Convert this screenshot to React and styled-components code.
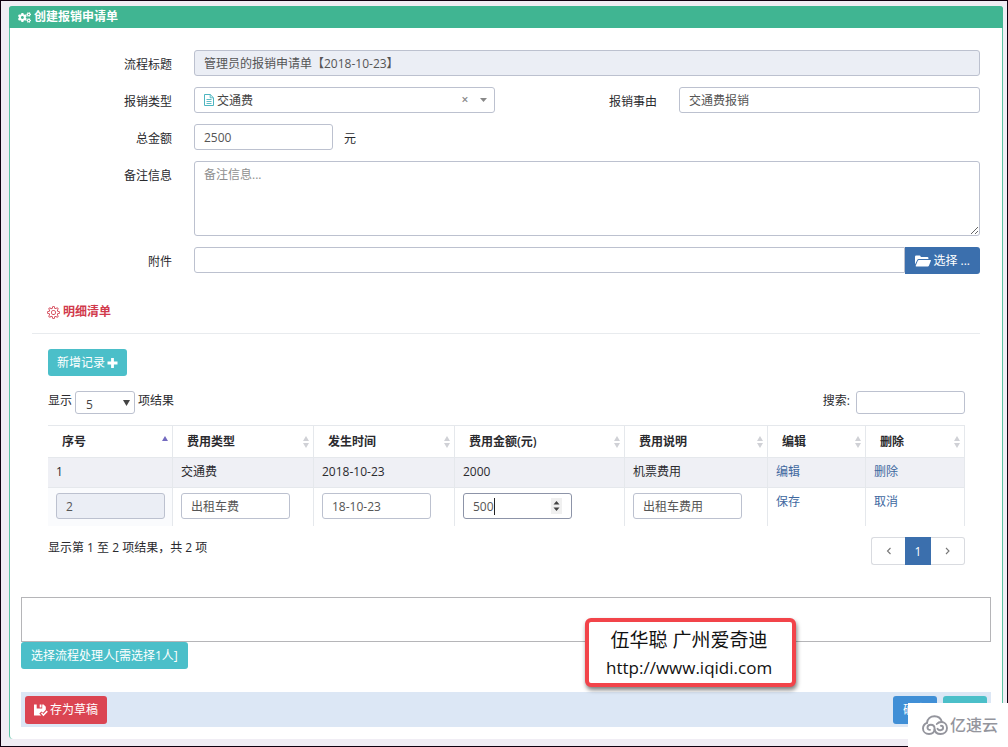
import React, { useState } from 'react';
import styled, { createGlobalStyle, css } from 'styled-components';
import { FaCogs } from 'react-icons/fa';
import { SlSettings } from 'react-icons/sl';

const GlobalStyle = createGlobalStyle`
  * {
    box-sizing: border-box;
  }

  body {
    margin: 0;
    background: #f0edf4;
    color: #2a2a2e;
    font-size: 12px;
    line-height: 18px;
  }

  body, input, select, textarea, button {
    font-family: "Open Sans", "Noto Sans CJK SC", sans-serif;
  }
`;

const Page = styled.div`
  border: 1px solid #100010;
  padding: 5px 4px 7px 8px;
  background: #f0edf4;
`;

const Panel = styled.div`
  border: 1px solid #5cc3a3;
  border-width: 0 1px;
  border-radius: 4px;
  background: #fff;
`;

const PanelTitle = styled.h1`
  display: flex;
  align-items: center;
  gap: 3px;
  height: 22px;
  margin: 0 -1px;
  padding: 0 9px;
  border-radius: 3px 3px 0 0;
  background: #40b592;
  color: #fff;
  font-size: 12px;
  font-weight: 600;
`;

const FormGrid = styled.div`
  display: grid;
  grid-template-columns: 140px 1fr 140px 1fr;
  gap: 11px 22px;
  padding: 22px 22px 0;
`;

const Label = styled.label`
  padding-top: 6px;
  text-align: right;
`;

const Wide = styled.div`
  display: flex;
  align-items: flex-start;
  grid-column: span 3;
`;

const control = css`
  border: 1px solid #bcc1cf;
  border-radius: 3px;
  background: #fff;
  color: #555;
  font-size: 12px;
  line-height: 18px;
  outline: none;
`;

const Input = styled.input`
  ${control}
  width: ${props => props.$width || '100%'};
  height: ${props => props.$height || '26px'};
  padding: 0 9px;

  &:read-only {
    background: #ebeef5;
  }

  &:focus {
    border-color: #8d94a8;
  }
`;

const FileInput = styled(Input)`
  flex: 1;
  min-width: 0;
  border-radius: 3px 0 0 3px;

  &:read-only {
    background: #fff;
  }
`;

const TextArea = styled.textarea`
  ${control}
  display: block;
  width: 100%;
  height: 75px;
  padding: 4px 9px;

  &::placeholder {
    color: #8f8f8f;
  }
`;

const Unit = styled.span`
  padding: 6px 11px 0;
`;

const SelectBox = styled.div`
  position: relative;
  width: ${props => props.$width || '100%'};
`;

const Select = styled.select`
  ${control}
  display: block;
  appearance: none;
  width: 100%;
  height: 26px;
  padding: 1px 44px 0 22px;
  color: #444;
`;

const LengthSelect = styled(Select)`
  height: 23px;
  padding: 3px 20px 0 10px;
  line-height: 20px;
`;

const Overlay = styled.span`
  position: absolute;
  top: 0;
  bottom: 0;
  left: ${props => props.$left || 'auto'};
  right: ${props => props.$right || 'auto'};
  display: flex;
  align-items: center;
  pointer-events: none;
`;

const ClearButton = styled.button`
  position: absolute;
  top: 5px;
  right: 22px;
  width: 16px;
  height: 16px;
  padding: 0;
  border: 0;
  background: none;
  color: #888;
  font-size: 12px;
  font-weight: 600;
  line-height: 16px;
`;

const buttonColors = {
  info: '#4bbfc9',
  primary: '#3b6fad',
  danger: '#db4552',
  confirm: '#408fd6',
};

const Button = styled.button`
  display: inline-flex;
  align-items: center;
  gap: 2px;
  min-width: 44px;
  height: ${props => props.$height || '27px'};
  padding: 0 ${props => (props.$icon ? '9px' : '10px')};
  border: 0;
  border-radius: ${props => (props.$attached ? '0 3px 3px 0' : '3px')};
  background: ${props => buttonColors[props.$kind]};
  color: #fff;
  font-size: 12px;
  line-height: 18px;
  white-space: nowrap;
`;

const Section = styled.section`
  padding: 28px 22px 0;
`;

const SectionTitle = styled.h2`
  display: flex;
  align-items: center;
  gap: 3px;
  margin: 0;
  padding: 0 15px 11px;
  border-bottom: 1px solid #e8ebee;
  color: #d13a4c;
  font-size: 12px;
  font-weight: 600;
  line-height: 20px;
`;

const SectionBody = styled.div`
  padding: 15px 15px 0 16px;
`;

const Toolbar = styled.div`
  display: flex;
  justify-content: space-between;
  margin: 15px 0 11px;
`;

const ToolbarLabel = styled.label`
  display: flex;
  gap: ${props => props.$gap};
  line-height: 19px;
`;

const Table = styled.table`
  width: 100%;
  table-layout: fixed;
  border-collapse: separate;
  border-spacing: 0;
`;

const Th = styled.th`
  position: relative;
  width: ${props => props.$width}px;
  height: 33px;
  padding: 0 14px;
  border: 1px solid #e5e8ec;
  border-left: 0;
  text-align: left;
  font-weight: 600;
`;

const Td = styled.td`
  padding: 5px 7px 5px 8px;
  border-right: 1px solid #e5e8ec;
  vertical-align: top;
`;

const Row = styled.tr`
  ${props => props.$striped && css`
    background: #eff0f5;

    & > td {
      height: 30px;
      border-bottom: 1px solid #e5e8ec;
    }
  `}

  ${props => props.$editing && css`
    & > td {
      height: 38px;
    }

    & > td:first-child {
      background: #fafbfd;
    }
  `}
`;

const CellInput = styled(Input)`
  display: block;
  max-width: 109px;
`;

const AmountCell = styled.div`
  position: relative;
  max-width: 109px;
`;

const AmountInput = styled(CellInput)`
  border-color: #8d94a8;
  appearance: textfield;
  caret-color: transparent;
`;

const Caret = styled.span`
  position: absolute;
  top: 5px;
  left: 31px;
  width: 1px;
  height: 17px;
  background: #222;
`;

const Link = styled.a`
  color: #40689f;
  text-decoration: none;
`;

const TableFooter = styled.div`
  display: flex;
  justify-content: space-between;
  margin-top: 11px;
  line-height: 22px;
`;

const Pagination = styled.nav`
  display: flex;
  height: 28px;
`;

const PageButton = styled.button`
  display: flex;
  align-items: center;
  justify-content: center;
  width: ${props => (props.$active ? '26px' : '34px')};
  padding: 0;
  border: 1px solid ${props => (props.$active ? '#3b6fad' : '#d9dbe0')};
  background: ${props => (props.$active ? '#3b6fad' : '#fff')};
  color: ${props => (props.$active ? '#fff' : '#666')};
  font-size: 12px;

  &:first-child {
    border-right: 0;
    border-radius: 3px 0 0 3px;
  }

  &:last-child {
    border-left: 0;
    border-radius: 0 3px 3px 0;
  }
`;

const Handlers = styled.div`
  padding: 32px 11px 0;
`;

const HandlerBox = styled.div`
  height: 45px;
  border: 1px solid #b5b5b8;
`;

const FooterArea = styled.div`
  padding: 23px 11px 12px;
`;

const FooterBar = styled.footer`
  display: flex;
  justify-content: space-between;
  height: 35px;
  padding: 4px 4px 3px;
  background: #dce7f5;
`;

const FooterGroup = styled.div`
  display: flex;
  gap: 6px;
`;

const Callout = styled.div`
  position: absolute;
  top: 618px;
  left: 585px;
  padding: 5px 20px 2px 17px;
  border: 4px solid #f2444a;
  border-radius: 6px;
  background: #fff;
  box-shadow: 1px 3px 4px rgba(0, 0, 0, 0.5);
  color: #111;
  font-size: 17px;
  line-height: 27px;
  text-align: center;
`;

const CalloutName = styled.div`
  font-size: 19px;
`;

const Badge = styled.div`
  position: absolute;
  top: 703px;
  right: 0;
  display: flex;
  align-items: center;
  gap: 2px;
  width: 100px;
  height: 44px;
  padding-left: 14px;
  background: #fff;
  color: #94959d;
  font-size: 16px;
  font-weight: 500;
`;

const FileIcon = () => (
  <svg width="10" height="12" viewBox="0 0 10 12" fill="none" stroke="#4db5c0">
    <path d="M.5.5h5.7l3.3 3.3v7.7h-9z" />
    <path d="M6.2.5v3.3h3.3M2.5 5.5h5M2.5 7.5h5M2.5 9.5h5" strokeWidth=".9" />
  </svg>
);

const FolderIcon = () => (
  <svg width="16" height="12" viewBox="0 0 16 12" fill="#fff">
    <path d="M0 9.6V1.8Q0 .5 1.2.5h3.4q.8 0 1 .8l.2.7h6.6q1 0 1 1v.9H3.6q-.9 0-1.2.8z" />
    <path d="M3.9 4.9h11.4q.9 0 .6.8l-2 5q-.3.8-1.1.8H1.2q-.8 0-.5-.8l2.1-5q.3-.8 1.1-.8z" />
  </svg>
);

const PlusIcon = () => (
  <svg width="11" height="10" viewBox="0 0 11 10" fill="none" stroke="#fff" strokeWidth="2.8">
    <path d="M5.500 0v10M.5 5h10" />
  </svg>
);

const SaveIcon = () => (
  <svg width="14" height="13" viewBox="0 0 14 13" fill="#fff">
    <path fillRule="evenodd" d="M0 .5h2.7v4h5.5v-4h1.4l2.2 2.2v3.1L9 8.7 7.5 7.4 5.3 9.6l1.9 2H0zM5.7.5h1.8v3.1H5.7z" />
    <path d="M7 9.6l1-1 1.4 1.3L12.7 6.6l1.1 1.1-4.4 4.5z" />
  </svg>
);

const CaretDown = ({ width, height, color }) => (
  <svg width={width} height={height} viewBox="0 0 8 6" preserveAspectRatio="none" fill={color}>
    <path d="M0 0h8L4 6z" />
  </svg>
);

const SpinIcon = () => (
  <svg width="11" height="16" viewBox="0 0 11 16">
    <path d="M0 0h11v16H0z" fill="#f0f0f0" />
    <path d="M2.500 6.500l3-3.500 3 3.500zM2.500 9.500l3 3.500 3-3.500z" fill="#444" />
  </svg>
);

const SortIcon = ({ asc }) => (
  <svg width="6" height="12" viewBox="0 0 6 12">
    <path d="M0 5l3-5 3 5z" fill={asc ? '#746bc0' : '#d0d1d6'} />
    {!asc && <path d="M0 7l3 5 3-5z" fill="#d0d1d6" />}
  </svg>
);

const Chevron = ({ d }) => (
  <svg width="6" height="8" viewBox="0 0 6 8" fill="none" stroke="#777" strokeWidth="1.1">
    <path d={d} />
  </svg>
);

const CloudIcon = () => (
  <svg width="26" height="20" viewBox="0 0 26 20" fill="none" stroke="#94959d" strokeWidth="1.9" strokeLinecap="round">
    <path d="M5 7.800C5.500 3.800 8.500 1.200 12.500 1.200c3.700 0 6.400 2.200 7.400 5.800" />
    <path d="M5 7.800C2.600 8.800 1 10.900 1 13.400 1 16.600 3.600 19 7 19c3.500 0 5.600-2.200 5.600-5.200 0-2.500-1.600-4.100-3.800-4.100-2 0-3.300 1.300-3.300 2.900 0 1.500 1.100 2.400 2.500 2.300" />
    <path d="M12.600 14.500C13 17.200 15.300 19 18.600 19c3.700 0 6.400-2.400 6.400-5.900 0-3.600-2.600-6.100-5.800-6.100-2 0-3.400.8-4.400 2M15.500 13.800c.6 1 1.700 1.500 2.900 1.400 1.600-.1 2.700-1.100 2.700-2.400 0-1.300-.9-2.100-2.100-2.100" />
  </svg>
);

const columns = [
  { title: '序号', width: 125, asc: true },
  { title: '费用类型', width: 141 },
  { title: '发生时间', width: 141 },
  { title: '费用金额(元)', width: 170 },
  { title: '费用说明', width: 143 },
  { title: '编辑', width: 98 },
  { title: '删除', width: 99 },
];

const App = () => {
  const [reason, setReason] = useState('交通费报销');
  const [total, setTotal] = useState('2500');

  return (
    <>
      <GlobalStyle />
      <Page>
        <Panel>
          <PanelTitle>
            <FaCogs size={13} />
            创建报销申请单
          </PanelTitle>
          <FormGrid>
            <Label htmlFor="title">流程标题</Label>
            <Wide>
              <Input id="title" readOnly value="管理员的报销申请单【2018-10-23】" />
            </Wide>

            <Label htmlFor="type">报销类型</Label>
            <SelectBox>
              <Select id="type" defaultValue="交通费">
                <option>交通费</option>
              </Select>
              <Overlay $left="10px"><FileIcon /></Overlay>
              <ClearButton type="button" aria-label="清除">×</ClearButton>
              <Overlay $right="8px"><CaretDown width={7} height={4} color="#888" /></Overlay>
            </SelectBox>
            <Label htmlFor="reason">报销事由</Label>
            <Input id="reason" value={reason} onChange={e => setReason(e.target.value)} />

            <Label htmlFor="total">总金额</Label>
            <Wide>
              <Input id="total" $width="139px" value={total} onChange={e => setTotal(e.target.value)} />
              <Unit>元</Unit>
            </Wide>

            <Label htmlFor="note">备注信息</Label>
            <Wide>
              <TextArea id="note" placeholder="备注信息..." />
            </Wide>

            <Label htmlFor="attachment">附件</Label>
            <Wide>
              <FileInput id="attachment" readOnly />
              <Button type="button" $kind="primary" $attached>
                <FolderIcon />
                选择 ...
              </Button>
            </Wide>
          </FormGrid>

          <Section>
            <SectionTitle>
              <SlSettings size={13} />
              明细清单
            </SectionTitle>
            <SectionBody>
              <Button type="button" $kind="info" $icon>
                新增记录
                <PlusIcon />
              </Button>
              <Toolbar>
                <ToolbarLabel $gap="3px">
                  显示
                  <SelectBox $width="60px">
                    <LengthSelect defaultValue="5">
                      <option>5</option>
                      <option>10</option>
                    </LengthSelect>
                    <Overlay $right="5px"><CaretDown width={7} height={6} color="#444" /></Overlay>
                  </SelectBox>
                  项结果
                </ToolbarLabel>
                <ToolbarLabel $gap="6px">
                  搜索:
                  <Input type="search" $width="109px" $height="23px" />
                </ToolbarLabel>
              </Toolbar>
              <Table>
                <thead>
                  <tr>
                    {columns.map(col => (
                      <Th key={col.title} $width={col.width}>
                        {col.title}
                        <Overlay $right="4px"><SortIcon asc={col.asc} /></Overlay>
                      </Th>
                    ))}
                  </tr>
                </thead>
                <tbody>
                  <Row $striped>
                    <Td>1</Td>
                    <Td>交通费</Td>
                    <Td>2018-10-23</Td>
                    <Td>2000</Td>
                    <Td>机票费用</Td>
                    <Td><Link href="#edit">编辑</Link></Td>
                    <Td><Link href="#delete">删除</Link></Td>
                  </Row>
                  <Row $editing>
                    <Td><CellInput aria-label="序号" readOnly value="2" /></Td>
                    <Td><CellInput aria-label="费用类型" defaultValue="出租车费" /></Td>
                    <Td><CellInput aria-label="发生时间" defaultValue="18-10-23" /></Td>
                    <Td>
                      <AmountCell>
                        <AmountInput type="number" aria-label="费用金额" defaultValue="500" />
                        <Caret />
                        <Overlay $right="10px"><SpinIcon /></Overlay>
                      </AmountCell>
                    </Td>
                    <Td><CellInput aria-label="费用说明" defaultValue="出租车费用" /></Td>
                    <Td><Link href="#save">保存</Link></Td>
                    <Td><Link href="#cancel">取消</Link></Td>
                  </Row>
                </tbody>
              </Table>
              <TableFooter>
                <span>显示第 1 至 2 项结果，共 2 项</span>
                <Pagination>
                  <PageButton type="button" aria-label="上页"><Chevron d="M4.500 1L1.500 4l3 3" /></PageButton>
                  <PageButton type="button" $active>1</PageButton>
                  <PageButton type="button" aria-label="下页"><Chevron d="M1 1l3 3-3 3" /></PageButton>
                </Pagination>
              </TableFooter>
            </SectionBody>
          </Section>

          <Handlers>
            <HandlerBox />
            <Button type="button" $kind="info">选择流程处理人[需选择1人]</Button>
          </Handlers>

          <FooterArea>
            <FooterBar>
              <Button type="button" $kind="danger" $height="28px" $icon>
                <SaveIcon />
                存为草稿
              </Button>
              <FooterGroup>
                <Button type="button" $kind="confirm" $height="28px">确定</Button>
                <Button type="button" $kind="info" $height="28px" aria-label="返回" />
              </FooterGroup>
            </FooterBar>
          </FooterArea>
        </Panel>
      </Page>
      <Callout>
        <CalloutName>伍华聪 广州爱奇迪</CalloutName>
        http://www.iqidi.com
      </Callout>
      <Badge>
        <CloudIcon />
        亿速云
      </Badge>
    </>
  );
};

export default App;
